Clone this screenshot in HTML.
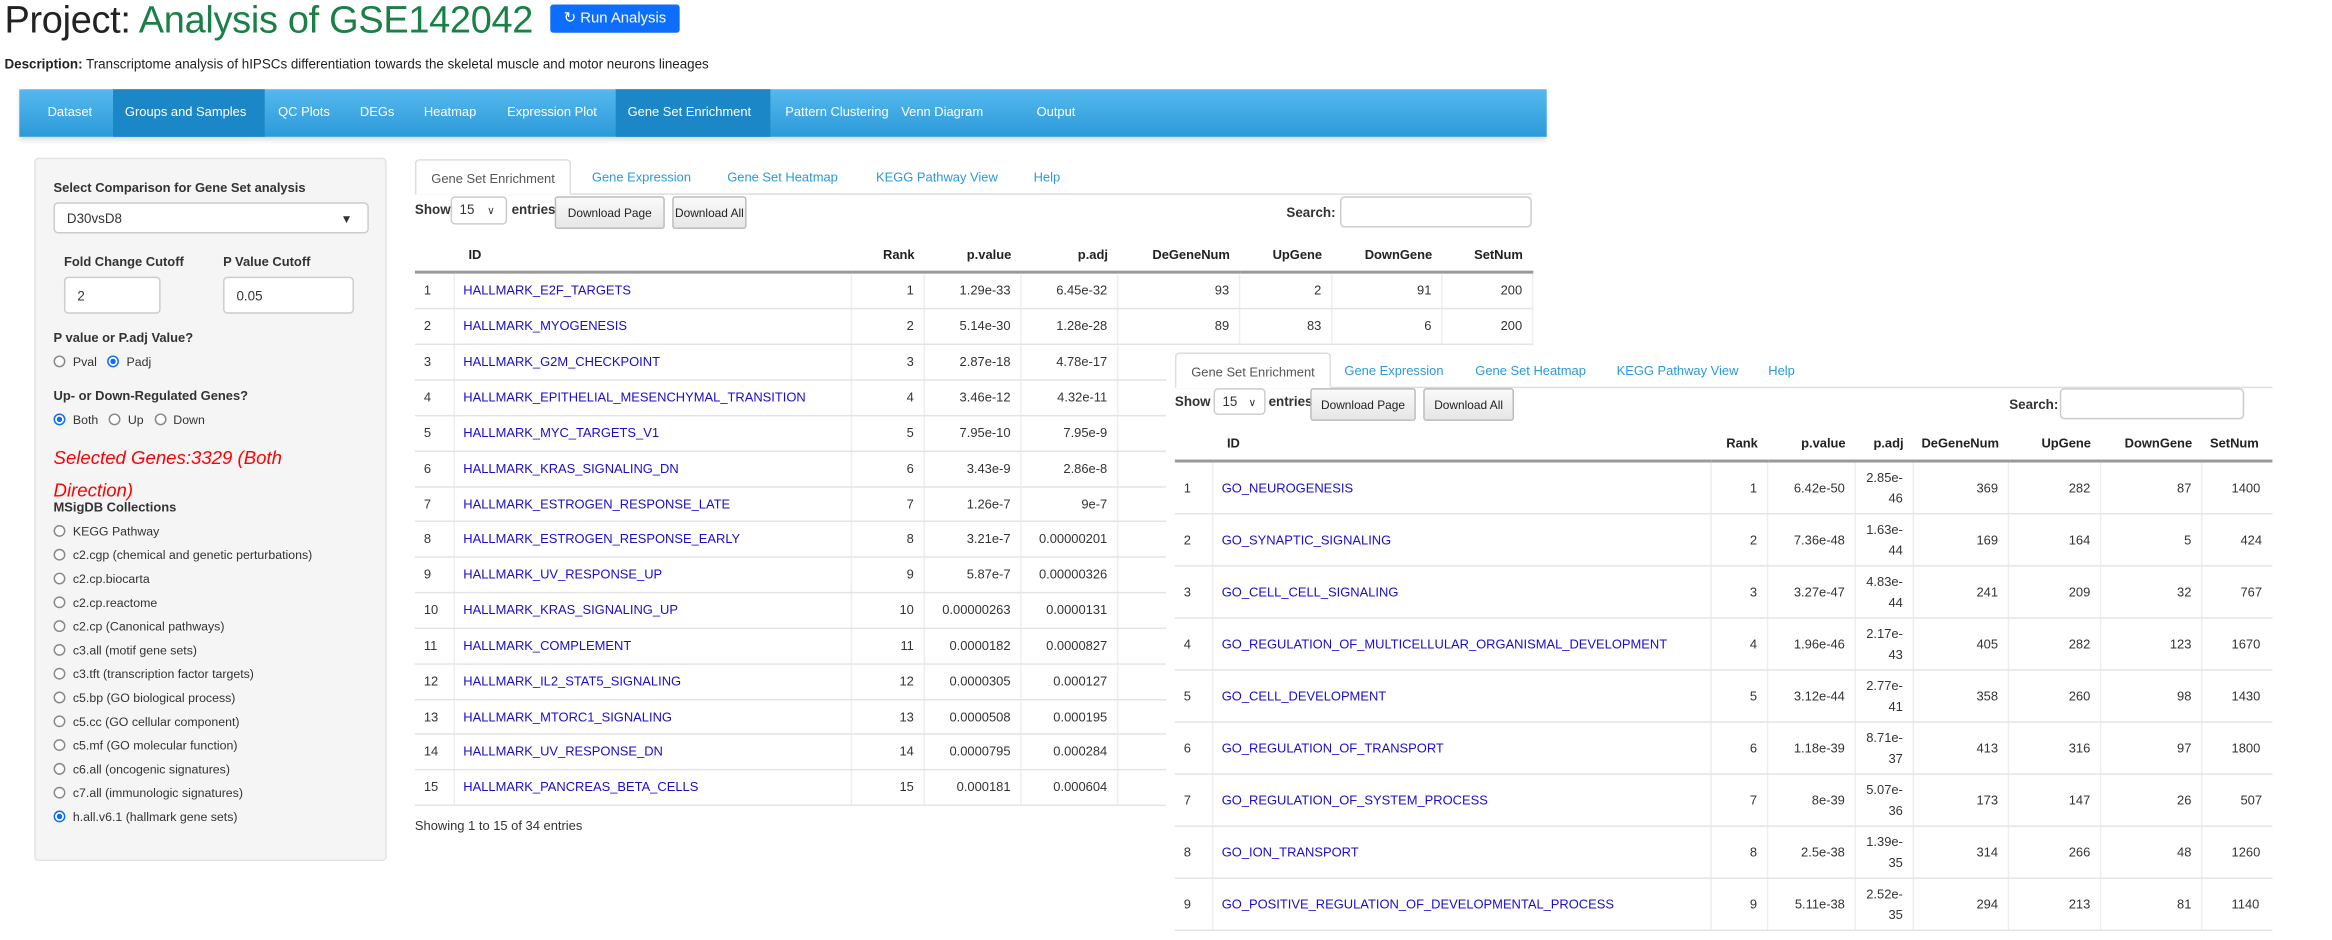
<!DOCTYPE html>
<html><head><meta charset="utf-8">
<style>
*{box-sizing:border-box}
html,body{margin:0;padding:0;background:#fff;overflow:hidden;width:2332px;height:940px}
#w{position:absolute;left:0;top:0;width:1568px;height:632px;transform:scale(1.4872);transform-origin:0 0;font-family:"Liberation Sans",Arial,sans-serif;color:#333;font-size:9px;white-space:nowrap}
.a{position:absolute}
h1{position:absolute;left:3px;top:0px;margin:0;font-weight:400;font-size:25.5px;color:#222;white-space:nowrap;letter-spacing:-0.2px}
h1 span{color:#1a8048}
.btn{position:absolute;left:370px;top:3px;width:87px;height:19px;background:#0d6efd;color:#fff;font-size:10px;line-height:19px;text-align:center;border-radius:2px}
.desc{left:3px;top:38px;font-size:9px;color:#222}
.nav{left:13px;top:60px;width:1027px;height:32px;background:linear-gradient(#55b8ee,#2c9ad9);box-shadow:0 2px 3px rgba(0,0,0,.15)}
.nav div{position:absolute;top:0;height:32px;line-height:31px;color:#fff;font-size:8.7px;padding:0 8px}
.nav .on{background:#1b87c6}
.well{left:23px;top:106px;width:237px;height:473px;background:#f5f5f5;border:1px solid #e3e3e3;border-radius:3px}
.lbl{font-weight:700;font-size:8.7px;color:#333}
.inp{background:#fff;border:1px solid #ccc;border-radius:3px;font-size:9px;padding-left:8px}
.r{position:absolute;font-size:8.3px;white-space:nowrap}
.r i{display:inline-block;width:8px;height:8px;border:1px solid #888;border-radius:50%;vertical-align:-1px;margin-right:5px;background:#fff}
.r i.c{border:1px solid #0d6efd;background:radial-gradient(#0d6efd 40%,#fff 45%)}
.tabs{height:24px;border-bottom:1px solid #ddd;font-size:8.7px}
.tabs div{position:absolute;top:0;height:24px;line-height:24px;color:#2a9ad8;padding:0 10px}
.tabs .on{color:#555;border:1px solid #ddd;border-bottom-color:#fff;background:#fff;border-radius:3px 3px 0 0}
table{border-collapse:collapse;position:absolute;table-layout:fixed;font-size:8.7px}
td,th{padding:0 6px;white-space:nowrap;overflow:hidden;border-right:1px solid #eee;border-bottom:1px solid #e4e4e4}
th{text-align:left;font-weight:700;color:#222;border-right:none;border-bottom:2px solid #999}
td{text-align:right;color:#333}
td.n{text-align:left}
td.l{text-align:left;color:#1a0dcc;border-right:1px solid #eee}
.db{position:absolute;height:22px;line-height:22px;background:linear-gradient(#fafafa,#e6e6e6);border:1px solid #bbb;font-size:8px;text-align:center;color:#222;border-radius:2px}
.sel{position:absolute;background:#fff;border:1px solid #ccc;border-radius:3px;font-size:9px;padding-left:5px;line-height:17px}
</style></head><body><div id="w">
<h1>Project: <span>Analysis of GSE142042</span></h1>
<div class="btn">&#x21bb; Run Analysis</div>
<div class="a desc"><b>Description:</b> Transcriptome analysis of hIPSCs differentiation towards the skeletal muscle and motor neurons lineages</div>
<div class="a nav">
<div style="left:11px">Dataset</div><div class="on" style="left:63px;width:102px">Groups and Samples</div><div style="left:166px">QC Plots</div><div style="left:221px">DEGs</div><div style="left:264px">Heatmap</div><div style="left:320px">Expression Plot</div><div class="on" style="left:401px;width:104px">Gene Set Enrichment</div><div style="left:507px">Pattern Clustering</div><div style="left:585px">Venn Diagram</div><div style="left:676px">Output</div>
</div>
<div class="a well">
<div class="a lbl" style="left:12px;top:14px">Select Comparison for Gene Set analysis</div>
<div class="a inp" style="left:12px;top:29px;width:212px;height:21px;line-height:21px">D30vsD8<span style="position:absolute;right:10px;font-size:8px">&#9660;</span></div>
<div class="a lbl" style="left:19px;top:64px">Fold Change Cutoff</div>
<div class="a lbl" style="left:126px;top:64px">P Value Cutoff</div>
<div class="a inp" style="left:19px;top:79px;width:65px;height:25px;line-height:25px">2</div>
<div class="a inp" style="left:126px;top:79px;width:88px;height:25px;line-height:25px">0.05</div>
<div class="a lbl" style="left:12px;top:115px">P value or P.adj Value?</div>
<div class="r" style="left:12px;top:131px"><i></i>Pval &nbsp;&nbsp;<i class="c"></i>Padj</div>
<div class="a lbl" style="left:12px;top:154px">Up- or Down-Regulated Genes?</div>
<div class="r" style="left:12px;top:170px"><i class="c"></i>Both &nbsp;&nbsp;<i></i>Up &nbsp;&nbsp;<i></i>Down</div>
<div class="a" style="left:12px;top:190px;color:#f00;font-style:italic;font-size:12.5px;line-height:22px;width:200px;white-space:normal">Selected Genes:3329 (Both Direction)</div>
<div class="a lbl" style="left:12px;top:229px">MSigDB Collections</div>
<div class="r" style="left:12px;top:245px"><i></i>KEGG Pathway</div>
<div class="r" style="left:12px;top:261px"><i></i>c2.cgp (chemical and genetic perturbations)</div>
<div class="r" style="left:12px;top:277px"><i></i>c2.cp.biocarta</div>
<div class="r" style="left:12px;top:293px"><i></i>c2.cp.reactome</div>
<div class="r" style="left:12px;top:309px"><i></i>c2.cp (Canonical pathways)</div>
<div class="r" style="left:12px;top:325px"><i></i>c3.all (motif gene sets)</div>
<div class="r" style="left:12px;top:341px"><i></i>c3.tft (transcription factor targets)</div>
<div class="r" style="left:12px;top:357px"><i></i>c5.bp (GO biological process)</div>
<div class="r" style="left:12px;top:373px"><i></i>c5.cc (GO cellular component)</div>
<div class="r" style="left:12px;top:389px"><i></i>c5.mf (GO molecular function)</div>
<div class="r" style="left:12px;top:405px"><i></i>c6.all (oncogenic signatures)</div>
<div class="r" style="left:12px;top:421px"><i></i>c7.all (immunologic signatures)</div>
<div class="r" style="left:12px;top:437px"><i class="c"></i>h.all.v6.1 (hallmark gene sets)</div>
</div>

<div class="a tabs" style="left:279px;top:107px;width:751px"><div class="on" style="left:0">Gene Set Enrichment</div><div style="left:109px">Gene Expression</div><div style="left:200px">Gene Set Heatmap</div><div style="left:300px">KEGG Pathway View</div><div style="left:406px">Help</div></div>
<div class="a" style="left:279px;top:136px;font-weight:700">Show</div>
<div class="sel" style="left:303px;top:132px;width:38px;height:19px">15 <span style="font-size:7px;margin-left:6px">&#8744;</span></div>
<div class="a" style="left:344px;top:136px;font-weight:700">entries</div>
<div class="db" style="left:373px;top:132px;width:74px">Download Page</div>
<div class="db" style="left:452px;top:132px;width:50px">Download All</div>
<div class="a" style="left:865px;top:138px;font-weight:700">Search:</div>
<div class="a inp" style="left:901px;top:132px;width:129px;height:21px"></div>
<table style="left:279px;top:160px;width:751px">
<colgroup><col style="width:26px"><col style="width:267px"><col style="width:49px"><col style="width:65px"><col style="width:65px"><col style="width:82px"><col style="width:62px"><col style="width:74px"><col style="width:61px"></colgroup>
<tr style="height:23px"><th></th><th style="padding-left:10px">ID</th><th style="text-align:right">Rank</th><th style="text-align:right">p.value</th><th style="text-align:right">p.adj</th><th style="text-align:right">DeGeneNum</th><th style="text-align:right">UpGene</th><th style="text-align:right">DownGene</th><th style="text-align:right">SetNum</th></tr>
<tr style="height:24px"><td class="n">1</td><td class="l">HALLMARK_E2F_TARGETS</td><td>1</td><td>1.29e-33</td><td>6.45e-32</td><td>93</td><td>2</td><td>91</td><td>200</td></tr>
<tr style="height:24px"><td class="n">2</td><td class="l">HALLMARK_MYOGENESIS</td><td>2</td><td>5.14e-30</td><td>1.28e-28</td><td>89</td><td>83</td><td>6</td><td>200</td></tr>
<tr style="height:24px"><td class="n">3</td><td class="l">HALLMARK_G2M_CHECKPOINT</td><td>3</td><td>2.87e-18</td><td>4.78e-17</td><td></td><td></td><td></td><td></td></tr>
<tr style="height:24px"><td class="n">4</td><td class="l">HALLMARK_EPITHELIAL_MESENCHYMAL_TRANSITION</td><td>4</td><td>3.46e-12</td><td>4.32e-11</td><td></td><td></td><td></td><td></td></tr>
<tr style="height:24px"><td class="n">5</td><td class="l">HALLMARK_MYC_TARGETS_V1</td><td>5</td><td>7.95e-10</td><td>7.95e-9</td><td></td><td></td><td></td><td></td></tr>
<tr style="height:24px"><td class="n">6</td><td class="l">HALLMARK_KRAS_SIGNALING_DN</td><td>6</td><td>3.43e-9</td><td>2.86e-8</td><td></td><td></td><td></td><td></td></tr>
<tr style="height:23px"><td class="n">7</td><td class="l">HALLMARK_ESTROGEN_RESPONSE_LATE</td><td>7</td><td>1.26e-7</td><td>9e-7</td><td></td><td></td><td></td><td></td></tr>
<tr style="height:24px"><td class="n">8</td><td class="l">HALLMARK_ESTROGEN_RESPONSE_EARLY</td><td>8</td><td>3.21e-7</td><td>0.00000201</td><td></td><td></td><td></td><td></td></tr>
<tr style="height:24px"><td class="n">9</td><td class="l">HALLMARK_UV_RESPONSE_UP</td><td>9</td><td>5.87e-7</td><td>0.00000326</td><td></td><td></td><td></td><td></td></tr>
<tr style="height:24px"><td class="n">10</td><td class="l">HALLMARK_KRAS_SIGNALING_UP</td><td>10</td><td>0.00000263</td><td>0.0000131</td><td></td><td></td><td></td><td></td></tr>
<tr style="height:24px"><td class="n">11</td><td class="l">HALLMARK_COMPLEMENT</td><td>11</td><td>0.0000182</td><td>0.0000827</td><td></td><td></td><td></td><td></td></tr>
<tr style="height:24px"><td class="n">12</td><td class="l">HALLMARK_IL2_STAT5_SIGNALING</td><td>12</td><td>0.0000305</td><td>0.000127</td><td></td><td></td><td></td><td></td></tr>
<tr style="height:23px"><td class="n">13</td><td class="l">HALLMARK_MTORC1_SIGNALING</td><td>13</td><td>0.0000508</td><td>0.000195</td><td></td><td></td><td></td><td></td></tr>
<tr style="height:24px"><td class="n">14</td><td class="l">HALLMARK_UV_RESPONSE_DN</td><td>14</td><td>0.0000795</td><td>0.000284</td><td></td><td></td><td></td><td></td></tr>
<tr style="height:24px;border-bottom:1px solid #999"><td class="n">15</td><td class="l">HALLMARK_PANCREAS_BETA_CELLS</td><td>15</td><td>0.000181</td><td>0.000604</td><td></td><td></td><td></td><td></td></tr>
</table>
<div class="a" style="left:279px;top:550px;font-size:8.7px">Showing 1 to 15 of 34 entries</div>

<div class="a" style="left:784px;top:232px;width:784px;height:400px;background:#fff;overflow:hidden">
<div class="a tabs" style="left:6px;top:5px;width:755px"><div class="on" style="left:0">Gene Set Enrichment</div><div style="left:104px">Gene Expression</div><div style="left:192px">Gene Set Heatmap</div><div style="left:287px">KEGG Pathway View</div><div style="left:389px">Help</div></div>
<div class="a" style="left:6px;top:33px;font-weight:700">Show</div>
<div class="sel" style="left:32px;top:29px;width:35px;height:18px">15 <span style="font-size:7px;margin-left:5px">&#8744;</span></div>
<div class="a" style="left:69px;top:33px;font-weight:700">entries</div>
<div class="db" style="left:97px;top:29px;width:71px">Download Page</div>
<div class="db" style="left:173px;top:29px;width:61px">Download All</div>
<div class="a" style="left:567px;top:35px;font-weight:700">Search:</div>
<div class="a inp" style="left:601px;top:29px;width:124px;height:21px"></div>
<table style="left:6px;top:55px;width:760px">
<colgroup><col style="width:25px"><col style="width:335px"><col style="width:38px"><col style="width:59px"><col style="width:39px"><col style="width:64px"><col style="width:62px"><col style="width:68px"><col style="width:70px"></colgroup>
<tr style="height:23px"><th></th><th style="padding-left:10px">ID</th><th style="text-align:right">Rank</th><th style="text-align:right">p.value</th><th style="text-align:right">p.adj</th><th style="text-align:right">DeGeneNum</th><th style="text-align:right">UpGene</th><th style="text-align:right">DownGene</th><th>SetNum</th></tr>
<tr style="height:35px"><td class="n">1</td><td class="l">GO_NEUROGENESIS</td><td>1</td><td>6.42e-50</td><td style="white-space:normal;line-height:14px">2.85e-46</td><td>369</td><td>282</td><td>87</td><td class="n" style="padding-left:20px">1400</td></tr>
<tr style="height:35px"><td class="n">2</td><td class="l">GO_SYNAPTIC_SIGNALING</td><td>2</td><td>7.36e-48</td><td style="white-space:normal;line-height:14px">1.63e-44</td><td>169</td><td>164</td><td>5</td><td class="n" style="padding-left:26px">424</td></tr>
<tr style="height:35px"><td class="n">3</td><td class="l">GO_CELL_CELL_SIGNALING</td><td>3</td><td>3.27e-47</td><td style="white-space:normal;line-height:14px">4.83e-44</td><td>241</td><td>209</td><td>32</td><td class="n" style="padding-left:26px">767</td></tr>
<tr style="height:35px"><td class="n">4</td><td class="l">GO_REGULATION_OF_MULTICELLULAR_ORGANISMAL_DEVELOPMENT</td><td>4</td><td>1.96e-46</td><td style="white-space:normal;line-height:14px">2.17e-43</td><td>405</td><td>282</td><td>123</td><td class="n" style="padding-left:20px">1670</td></tr>
<tr style="height:35px"><td class="n">5</td><td class="l">GO_CELL_DEVELOPMENT</td><td>5</td><td>3.12e-44</td><td style="white-space:normal;line-height:14px">2.77e-41</td><td>358</td><td>260</td><td>98</td><td class="n" style="padding-left:20px">1430</td></tr>
<tr style="height:35px"><td class="n">6</td><td class="l">GO_REGULATION_OF_TRANSPORT</td><td>6</td><td>1.18e-39</td><td style="white-space:normal;line-height:14px">8.71e-37</td><td>413</td><td>316</td><td>97</td><td class="n" style="padding-left:20px">1800</td></tr>
<tr style="height:35px"><td class="n">7</td><td class="l">GO_REGULATION_OF_SYSTEM_PROCESS</td><td>7</td><td>8e-39</td><td style="white-space:normal;line-height:14px">5.07e-36</td><td>173</td><td>147</td><td>26</td><td class="n" style="padding-left:26px">507</td></tr>
<tr style="height:35px"><td class="n">8</td><td class="l">GO_ION_TRANSPORT</td><td>8</td><td>2.5e-38</td><td style="white-space:normal;line-height:14px">1.39e-35</td><td>314</td><td>266</td><td>48</td><td class="n" style="padding-left:20px">1260</td></tr>
<tr style="height:35px"><td class="n">9</td><td class="l">GO_POSITIVE_REGULATION_OF_DEVELOPMENTAL_PROCESS</td><td>9</td><td>5.11e-38</td><td style="white-space:normal;line-height:14px">2.52e-35</td><td>294</td><td>213</td><td>81</td><td class="n" style="padding-left:20px">1140</td></tr>
</table>
<div class="a" style="left:744px;top:0;width:40px;height:400px;background:#fff"></div>
</div>
</div></body></html>
